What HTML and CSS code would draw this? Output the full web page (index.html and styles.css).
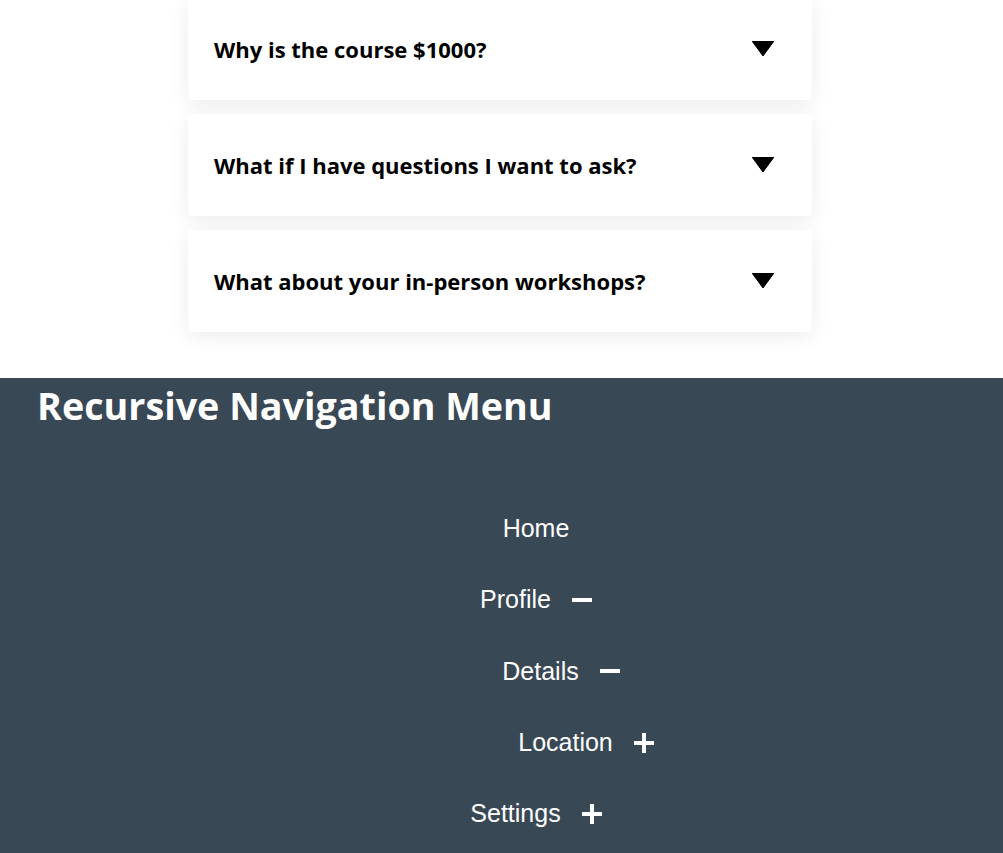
FILE: index.html
```html
<!DOCTYPE html>
<html lang="en">
<head>
<meta charset="utf-8">
<title>FAQ and Recursive Navigation Menu</title>
<link rel="stylesheet" href="styles.css">
</head>
<body>
<section class="faq">
  <div class="faq-item">
    <span class="faq-q">Why is the course $1000?</span>
    <svg class="caret" width="22" height="15" viewBox="0 0 22 15"><polygon points="0,0 22,0 11,15" fill="#000" stroke="#000" stroke-width="1" stroke-linejoin="round"/></svg>
  </div>
  <div class="faq-item">
    <span class="faq-q">What if I have questions I want to ask?</span>
    <svg class="caret" width="22" height="15" viewBox="0 0 22 15"><polygon points="0,0 22,0 11,15" fill="#000" stroke="#000" stroke-width="1" stroke-linejoin="round"/></svg>
  </div>
  <div class="faq-item">
    <span class="faq-q">What about your in-person workshops?</span>
    <svg class="caret" width="22" height="15" viewBox="0 0 22 15"><polygon points="0,0 22,0 11,15" fill="#000" stroke="#000" stroke-width="1" stroke-linejoin="round"/></svg>
  </div>
</section>
<section class="nav-section">
  <h1 class="nav-title">Recursive Navigation Menu</h1>
  <ul class="menu">
    <li><div class="menu-row"><span>Home</span></div></li>
    <li>
      <div class="menu-row"><span>Profile</span>
        <svg class="toggle" width="20" height="20" viewBox="0 0 20 20"><rect x="0" y="8" width="20" height="4" fill="#fff"/></svg>
      </div>
      <ul class="menu sub">
        <li>
          <div class="menu-row"><span>Details</span>
            <svg class="toggle" width="20" height="20" viewBox="0 0 20 20"><rect x="0" y="8" width="20" height="4" fill="#fff"/></svg>
          </div>
          <ul class="menu sub">
            <li><div class="menu-row"><span>Location</span>
              <svg class="toggle" width="20" height="20" viewBox="0 0 20 20"><rect x="0" y="8" width="20" height="4" fill="#fff"/><rect x="8" y="0" width="4" height="20" fill="#fff"/></svg>
            </div></li>
          </ul>
        </li>
      </ul>
    </li>
    <li><div class="menu-row"><span>Settings</span>
      <svg class="toggle" width="20" height="20" viewBox="0 0 20 20"><rect x="0" y="8" width="20" height="4" fill="#fff"/><rect x="8" y="0" width="4" height="20" fill="#fff"/></svg>
    </div></li>
  </ul>
</section>
</body>
</html>
```

FILE: styles.css
```css
html, body {
  margin: 0;
  padding: 0;
  background: #fff;
}

.faq {
  display: flex;
  flex-direction: column;
  gap: 14px;
  width: 624px;
  margin: -2px auto 0 188px;
  padding-bottom: 46px;
}

.faq-item {
  display: flex;
  align-items: center;
  justify-content: space-between;
  height: 102px;
  box-sizing: border-box;
  padding: 0 38px 0 26px;
  background: #fff;
  border-radius: 4px;
  box-shadow: 0 4px 20px rgba(0, 0, 0, 0.08);
}

.faq-q {
  font-family: "Open Sans", "Noto Sans", sans-serif;
  font-weight: 700;
  font-size: 22px;
  color: #000;
}

.caret {
  display: block;
  margin-top: -2px;
}

.nav-section {
  background: #394855;
  min-height: 480px;
  padding: 2px 0 40px;
}

.nav-title {
  margin: 0 0 0 37px;
  font-family: "Open Sans", "Noto Sans", sans-serif;
  font-weight: 700;
  font-size: 37.7px;
  color: #fff;
  line-height: 52px;
}

.menu {
  list-style: none;
  margin: 0;
  padding: 61px 0 0 69px;
}

.menu.sub {
  padding: 0 0 0 50px;
}

.menu-row {
  display: flex;
  justify-content: center;
  align-items: center;
  gap: 21px;
  height: 71.3px;
  font-family: "Liberation Sans", Arial, sans-serif;
  font-size: 25px;
  color: #fff;
}

.toggle {
  display: block;
}
```
